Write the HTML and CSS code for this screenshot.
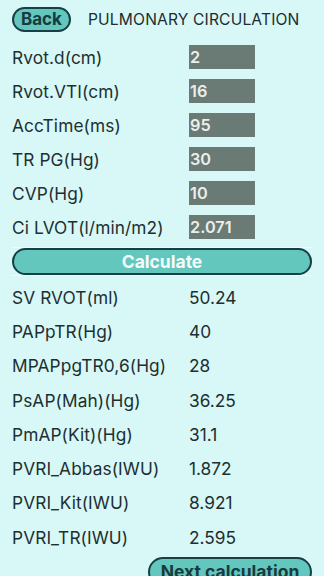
FILE: index.html
```html
<!DOCTYPE html>
<html>
<head>
<meta charset="utf-8">
<link rel="stylesheet" href="styles.css">
</head>
<body>
<div class="page">
  <div class="header">
    <button class="btn back">Back</button>
    <div class="title">PULMONARY CIRCULATION</div>
  </div>
  <div class="inputs">
    <div class="row"><span class="label">Rvot.d(cm)</span><span class="field">2</span></div>
    <div class="row"><span class="label">Rvot.VTI(cm)</span><span class="field">16</span></div>
    <div class="row"><span class="label">AccTime(ms)</span><span class="field">95</span></div>
    <div class="row"><span class="label">TR PG(Hg)</span><span class="field">30</span></div>
    <div class="row"><span class="label">CVP(Hg)</span><span class="field">10</span></div>
    <div class="row"><span class="label">Ci LVOT(l/min/m2)</span><span class="field">2.071</span></div>
  </div>
  <div class="calc-wrap"><button class="btn calc">Calculate</button></div>
  <div class="results">
    <div class="rrow"><span class="label">SV RVOT(ml)</span><span class="value">50.24</span></div>
    <div class="rrow"><span class="label">PAPpTR(Hg)</span><span class="value">40</span></div>
    <div class="rrow"><span class="label">MPAPpgTR0,6(Hg)</span><span class="value">28</span></div>
    <div class="rrow"><span class="label">PsAP(Mah)(Hg)</span><span class="value">36.25</span></div>
    <div class="rrow"><span class="label">PmAP(Kit)(Hg)</span><span class="value">31.1</span></div>
    <div class="rrow"><span class="label">PVRI_Abbas(IWU)</span><span class="value">1.872</span></div>
    <div class="rrow"><span class="label">PVRI_Kit(IWU)</span><span class="value">8.921</span></div>
    <div class="rrow"><span class="label">PVRI_TR(IWU)</span><span class="value">2.595</span></div>
  </div>
  <div class="next-wrap"><button class="btn next">Next calculation</button></div>
</div>
</body>
</html>
```
FILE: styles.css
```css
html, body {
  margin: 0;
  padding: 0;
  background: #d7f8f6;
  overflow: hidden;
}
body {
  font-family: "Inter", "Liberation Sans", sans-serif;
  color: #1e2e31;
}
.page {
  padding: 7px 12px 0 12px;
  display: flex;
  flex-direction: column;
}
.btn {
  font-family: "Inter", "Liberation Sans", sans-serif;
  background: #63c7bd;
  border: 2px solid #173f44;
  border-radius: 14px;
  font-weight: 700;
  color: #173c40;
  padding: 0;
  box-sizing: border-box;
}
.header {
  display: flex;
  align-items: center;
  height: 25px;
  gap: 17px;
  margin-bottom: 13px;
}
.back {
  width: 59px;
  height: 25px;
  font-size: 17px;
  line-height: 21px;
}
.title {
  font-size: 15.6px;
  letter-spacing: 0.15px;
  color: #1d2c30;
}
.inputs {
  display: flex;
  flex-direction: column;
  gap: 10px;
}
.row, .rrow {
  display: grid;
  grid-template-columns: 177px 1fr;
  align-items: center;
}
.row { height: 24px; }
.rrow { height: 34.3px; }
.label {
  font-size: 17.3px;
  letter-spacing: 0.1px;
  white-space: nowrap;
}
.field {
  width: 66px;
  height: 24px;
  background: #6a7a75;
  color: #eceeec;
  font-size: 16.3px;
  font-weight: 600;
  line-height: 24px;
  padding-left: 1px;
  box-sizing: border-box;
}
.value {
  font-size: 17.3px;
}
.calc-wrap {
  margin-top: 8px;
  border-top: 1px solid #eefcfb;
  border-bottom: 1px solid #eefcfb;
}
.calc {
  display: block;
  width: 100%;
  height: 27px;
  border-radius: 14px;
  color: #f4fbfa;
  font-size: 17.5px;
  line-height: 23px;
}
.results {
  margin-top: 4px;
  display: flex;
  flex-direction: column;
}
.next-wrap {
  margin-top: 3px;
  display: flex;
  justify-content: flex-end;
}
.next {
  width: 164px;
  height: 30px;
  font-size: 17.5px;
  line-height: 24px;
  border-radius: 15px;
  text-align: center;
}
```
